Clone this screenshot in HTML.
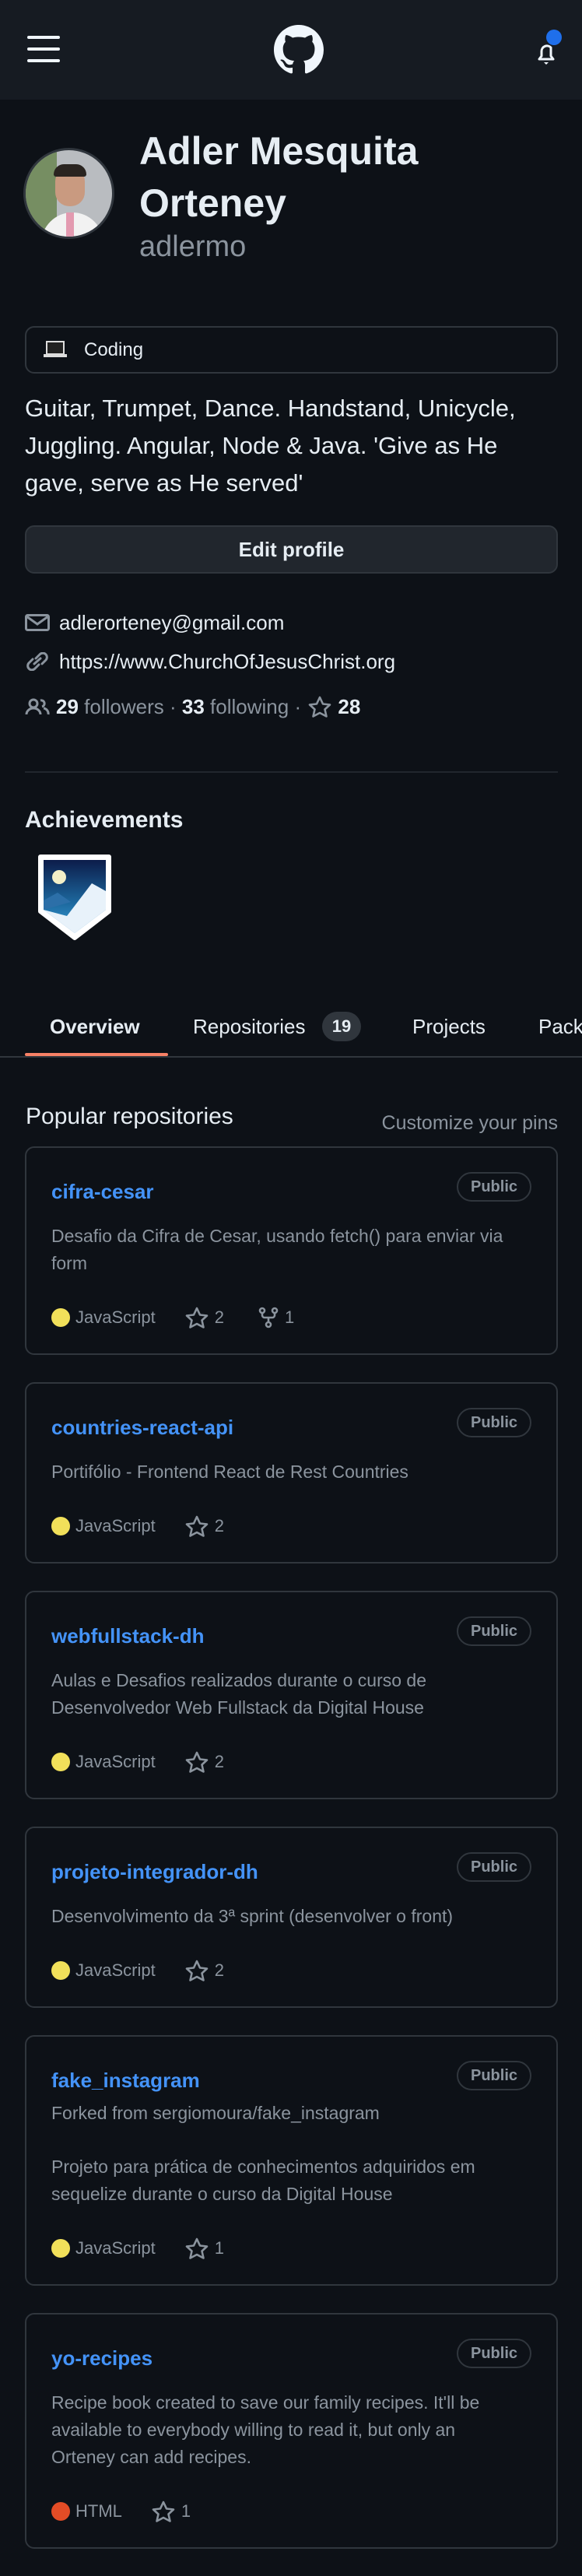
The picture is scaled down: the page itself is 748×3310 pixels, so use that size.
<!DOCTYPE html>
<html><head><meta charset="utf-8"><style>
*{margin:0;padding:0;box-sizing:border-box}
html,body{width:748px;height:3252px;overflow:hidden;background:#0d1117;font-family:"Liberation Sans",sans-serif;color:#e6edf3}
.a{position:absolute}
.hdr{left:0;top:0;width:748px;height:128px;background:#161b22}
.bar{position:absolute;left:35px;width:42px;height:4px;border-radius:2px;background:#f0f6fc}
.name{left:179px;top:161px;font-size:50px;line-height:67px;font-weight:bold;color:#e6edf3;white-space:nowrap}
.user{left:179px;top:294px;font-size:38px;line-height:46px;color:#8b949e}
.status{left:32px;top:419px;width:685px;height:61px;border:2px solid #30363d;border-radius:12px}
.bio{left:32px;top:501px;font-size:31px;line-height:48px;white-space:nowrap}
.btn{left:32px;top:675px;width:685px;height:62px;border:2px solid #30363d;border-radius:12px;background:#21262d;text-align:center;font-size:26px;font-weight:bold;line-height:58px}
.row{left:32px;font-size:26px;line-height:32px;white-space:nowrap;display:flex;align-items:center}
.g{color:#8b949e}
.tabs{left:0;top:1290px;width:748px;height:70px;overflow:hidden}
.tab{top:10px;font-size:26px;line-height:38px;white-space:nowrap}
.card{position:relative;margin:0 31px 35px 32px;border:2px solid #30363d;border-radius:12px;padding:38px 32px 29px 32px}
.t{font-size:26px;line-height:36px;font-weight:bold;color:#4493f8}
.pub{position:absolute;right:32px;top:31px;height:38px;padding:0 16px;border:2px solid #30363d;border-radius:19px;font-size:20px;font-weight:bold;line-height:34px;color:#8b949e}
.d{margin-top:22px;font-size:23px;line-height:35px;color:#8b949e;white-space:nowrap}
.f{margin-top:7px;font-size:23px;line-height:35px;color:#8b949e}
.m{margin-top:34px;font-size:22px;line-height:35px;color:#8b949e;display:flex;align-items:center;height:35px}
.dot{width:24px;height:24px;border-radius:50%;margin-right:7px;display:inline-block}
.m svg{margin-right:8px}
</style></head><body>
<div class="a hdr">
<div class="bar" style="top:46px"></div><div class="bar" style="top:61px"></div><div class="bar" style="top:76px"></div>
<svg class="a" style="left:352px;top:32px" width="64" height="64" viewBox="0 0 16 16"><path fill="#f0f6fc" d="M8 0C3.58 0 0 3.58 0 8c0 3.54 2.290 6.53 5.47 7.59.4.07.55-.17.55-.38 0-.19-.01-.82-.01-1.49-2.01.37-2.53-.49-2.69-.94-.09-.23-.48-.94-.82-1.13-.28-.15-.68-.52-.01-.53.63-.01 1.08.58 1.23.82.72 1.21 1.87.87 2.33.66.07-.52.28-.87.51-1.07-1.78-.2-3.64-.89-3.64-3.95 0-.87.31-1.59.82-2.15-.08-.2-.36-1.02.08-2.12 0 0 .67-.21 2.2.82.64-.18 1.32-.27 2-.27.68 0 1.36.09 2 .27 1.53-1.04 2.2-.82 2.2-.82.44 1.1.16 1.92.08 2.12.51.56.82 1.27.82 2.15 0 3.07-1.87 3.75-3.65 3.95.29.25.54.73.54 1.48 0 1.07-.01 1.93-.01 2.2 0 .21.15.46.55.38A8.013 8.013 0 0016 8c0-4.42-3.58-8-8-8z"/></svg>
<svg class="a" style="left:686px;top:50px" width="32" height="36" viewBox="0 0 32 36"><path d="M7 26 L10 22 V16 a7 7 0 0 1 12 -5 V22 L25 26 Z" fill="none" stroke="#f0f6fc" stroke-width="3" stroke-linejoin="round"/><path d="M13 30 h6 l-3 3z" fill="#f0f6fc"/></svg>
<div class="a" style="left:702px;top:38px;width:20px;height:20px;border-radius:50%;background:#1f6feb"></div>
</div>
<div class="a" style="left:30px;top:190px;width:117px;height:117px;border-radius:50%;border:3px solid #30363d;overflow:hidden;background:#b9bcc0">
<div class="a" style="left:0;top:0;width:40px;height:110px;background:#5a7a3a;opacity:.7"></div>
<div class="a" style="left:20px;top:80px;width:80px;height:50px;border-radius:40px 40px 0 0;background:#f2f2f2"></div>
<div class="a" style="left:38px;top:22px;width:38px;height:50px;border-radius:18px;background:#c99a80"></div>
<div class="a" style="left:36px;top:18px;width:42px;height:16px;border-radius:18px 18px 4px 4px;background:#2a2420"></div>
<div class="a" style="left:52px;top:80px;width:10px;height:40px;background:#e39ab0"></div>
</div>
<div class="a name">Adler Mesquita<br>Orteney</div>
<div class="a user">adlermo</div>
<div class="a status"><svg class="a" style="left:22px;top:16px" width="30" height="24" viewBox="0 0 30 24"><rect x="4" y="2" width="22" height="16" fill="#222" stroke="#ddd" stroke-width="2"/><rect x="0" y="18" width="30" height="4" fill="#ddd"/></svg><div class="a" style="left:74px;top:13px;font-size:24px;line-height:32px">Coding</div></div>
<div class="a bio">Guitar, Trumpet, Dance. Handstand, Unicycle,<br>Juggling. Angular, Node &amp; Java. 'Give as He<br>gave, serve as He served'</div>
<div class="a btn">Edit profile</div>
<div class="a row" style="top:784px"><svg width="32" height="22" viewBox="0 0 32 22" style="margin-right:12px"><rect x="1.5" y="1.5" width="29" height="19" rx="2" fill="none" stroke="#8b949e" stroke-width="3"/><path d="M2 3 L16 13 L30 3" fill="none" stroke="#8b949e" stroke-width="3"/></svg>adlerorteney@gmail.com</div>
<div class="a row" style="top:834px"><svg width="32" height="24" viewBox="0 0 32 24" style="margin-right:12px"><g fill="none" stroke="#8b949e" stroke-width="3" stroke-linecap="round"><path d="M14 8 l5-5 a5 5 0 0 1 8 7 l-5 5"/><path d="M18 16 l-5 5 a5 5 0 0 1 -8 -7 l5 -5"/><path d="M12 15 l8 -7"/></g></svg>https://www.ChurchOfJesusChrist.org</div>
<div class="a row" style="top:892px"><svg width="32" height="24" viewBox="0 0 32 24" style="margin-right:8px"><g fill="none" stroke="#8b949e" stroke-width="3"><circle cx="11" cy="8" r="5"/><path d="M2 22 a9 8 0 0 1 18 0"/><path d="M20 4 a4 4 0 0 1 2 8 M24 14 a7 7 0 0 1 6 8"/></g></svg><b>29</b>&nbsp;<span class="g">followers</span>&nbsp;<span class="g">·</span>&nbsp;<b>33</b>&nbsp;<span class="g">following</span>&nbsp;<span class="g">·</span>&nbsp;<svg width="30" height="28" viewBox="0 0 30 28" style="margin:0 8px 0 2px"><polygon points="15,2 19,10.5 28,11.5 21.5,17.5 23.5,26.5 15,22 6.5,26.5 8.5,17.5 2,11.5 11,10.5" fill="none" stroke="#8b949e" stroke-width="2.6" stroke-linejoin="round"/></svg><b>28</b></div>
<div class="a" style="left:32px;top:991px;width:685px;height:2px;background:#21262d"></div>
<div class="a" style="left:32px;top:1036px;font-size:30px;line-height:36px;font-weight:bold">Achievements</div>
<svg class="a" style="left:46px;top:1097px" width="100" height="112" viewBox="0 0 100 112"><defs><linearGradient id="sk" x1="0" y1="0" x2="0" y2="1"><stop offset="0" stop-color="#0c1c4a"/><stop offset=".6" stop-color="#1d6aa0"/><stop offset="1" stop-color="#3aa0d8"/></linearGradient></defs><path d="M6 4 H94 V74 L50 108 L6 74 Z" fill="#fff" stroke="#fff" stroke-width="6" stroke-linejoin="round"/><path d="M10 8 H90 V72 L50 102 L10 72 Z" fill="url(#sk)"/><circle cx="30" cy="30" r="9" fill="#f3efc8"/><path d="M10 72 L50 102 L90 72 V48 L72 38 L40 80 Z" fill="#e8f2fa"/><path d="M10 60 L28 50 L45 62 L10 72Z" fill="#2c6fa8"/></svg>
<div class="a tabs">
<div class="a tab" style="left:64px;font-weight:bold">Overview</div>
<div class="a tab" style="left:248px">Repositories</div>
<div class="a" style="left:414px;top:10px;width:50px;height:38px;border-radius:19px;background:#30363d;font-size:22px;font-weight:bold;line-height:38px;text-align:center">19</div>
<div class="a tab" style="left:530px">Projects</div>
<div class="a tab" style="left:692px">Packages</div>
<div class="a" style="left:32px;top:63px;width:184px;height:4px;background:#f78166;border-radius:2px"></div>
<div class="a" style="left:0;top:67px;width:748px;height:2px;background:#30363d"></div>
</div>
<div class="a" style="left:33px;top:1417px;font-size:30px;line-height:36px">Popular repositories</div>
<div class="a g" style="right:31px;top:1428px;font-size:25px;line-height:30px">Customize your pins</div>
<div class="a" style="left:0;top:1473px;width:748px">
<div class="card"><div class="t">cifra-cesar</div><div class="pub">Public</div><div class="d">Desafio da Cifra de Cesar, usando fetch() para enviar via<br>form</div><div class="m"><span class="dot" style="background:#f1e05a"></span>JavaScript<svg style="margin-left:38px" width="30" height="28" viewBox="0 0 30 28"><polygon points="15,2 19,10.5 28,11.5 21.5,17.5 23.5,26.5 15,22 6.5,26.5 8.5,17.5 2,11.5 11,10.5" fill="none" stroke="#8b949e" stroke-width="2.6" stroke-linejoin="round"/></svg>2<svg style="margin-left:44px" width="26" height="28" viewBox="0 0 26 28"><g fill="none" stroke="#8b949e" stroke-width="2.6"><circle cx="5" cy="5" r="3"/><circle cx="21" cy="5" r="3"/><circle cx="13" cy="23" r="3"/><path d="M5 8 v3 a3 3 0 0 0 3 3 h10 a3 3 0 0 0 3 -3 v-3 M13 14 v6"/></g></svg>1</div></div>
<div class="card"><div class="t">countries-react-api</div><div class="pub">Public</div><div class="d">Portifólio - Frontend React de Rest Countries</div><div class="m"><span class="dot" style="background:#f1e05a"></span>JavaScript<svg style="margin-left:38px" width="30" height="28" viewBox="0 0 30 28"><polygon points="15,2 19,10.5 28,11.5 21.5,17.5 23.5,26.5 15,22 6.5,26.5 8.5,17.5 2,11.5 11,10.5" fill="none" stroke="#8b949e" stroke-width="2.6" stroke-linejoin="round"/></svg>2</div></div>
<div class="card"><div class="t">webfullstack-dh</div><div class="pub">Public</div><div class="d">Aulas e Desafios realizados durante o curso de<br>Desenvolvedor Web Fullstack da Digital House</div><div class="m"><span class="dot" style="background:#f1e05a"></span>JavaScript<svg style="margin-left:38px" width="30" height="28" viewBox="0 0 30 28"><polygon points="15,2 19,10.5 28,11.5 21.5,17.5 23.5,26.5 15,22 6.5,26.5 8.5,17.5 2,11.5 11,10.5" fill="none" stroke="#8b949e" stroke-width="2.6" stroke-linejoin="round"/></svg>2</div></div>
<div class="card"><div class="t">projeto-integrador-dh</div><div class="pub">Public</div><div class="d">Desenvolvimento da 3ª sprint (desenvolver o front)</div><div class="m"><span class="dot" style="background:#f1e05a"></span>JavaScript<svg style="margin-left:38px" width="30" height="28" viewBox="0 0 30 28"><polygon points="15,2 19,10.5 28,11.5 21.5,17.5 23.5,26.5 15,22 6.5,26.5 8.5,17.5 2,11.5 11,10.5" fill="none" stroke="#8b949e" stroke-width="2.6" stroke-linejoin="round"/></svg>2</div></div>
<div class="card"><div class="t">fake_instagram</div><div class="pub">Public</div><div class="f">Forked from sergiomoura/fake_instagram</div><div class="d" style="margin-top:34px">Projeto para prática de conhecimentos adquiridos em<br>sequelize durante o curso da Digital House</div><div class="m"><span class="dot" style="background:#f1e05a"></span>JavaScript<svg style="margin-left:38px" width="30" height="28" viewBox="0 0 30 28"><polygon points="15,2 19,10.5 28,11.5 21.5,17.5 23.5,26.5 15,22 6.5,26.5 8.5,17.5 2,11.5 11,10.5" fill="none" stroke="#8b949e" stroke-width="2.6" stroke-linejoin="round"/></svg>1</div></div>
<div class="card"><div class="t">yo-recipes</div><div class="pub">Public</div><div class="d">Recipe book created to save our family recipes. It'll be<br>available to everybody willing to read it, but only an<br>Orteney can add recipes.</div><div class="m"><span class="dot" style="background:#e34c26"></span>HTML<svg style="margin-left:38px" width="30" height="28" viewBox="0 0 30 28"><polygon points="15,2 19,10.5 28,11.5 21.5,17.5 23.5,26.5 15,22 6.5,26.5 8.5,17.5 2,11.5 11,10.5" fill="none" stroke="#8b949e" stroke-width="2.6" stroke-linejoin="round"/></svg>1</div></div>
</div>
</body></html>
